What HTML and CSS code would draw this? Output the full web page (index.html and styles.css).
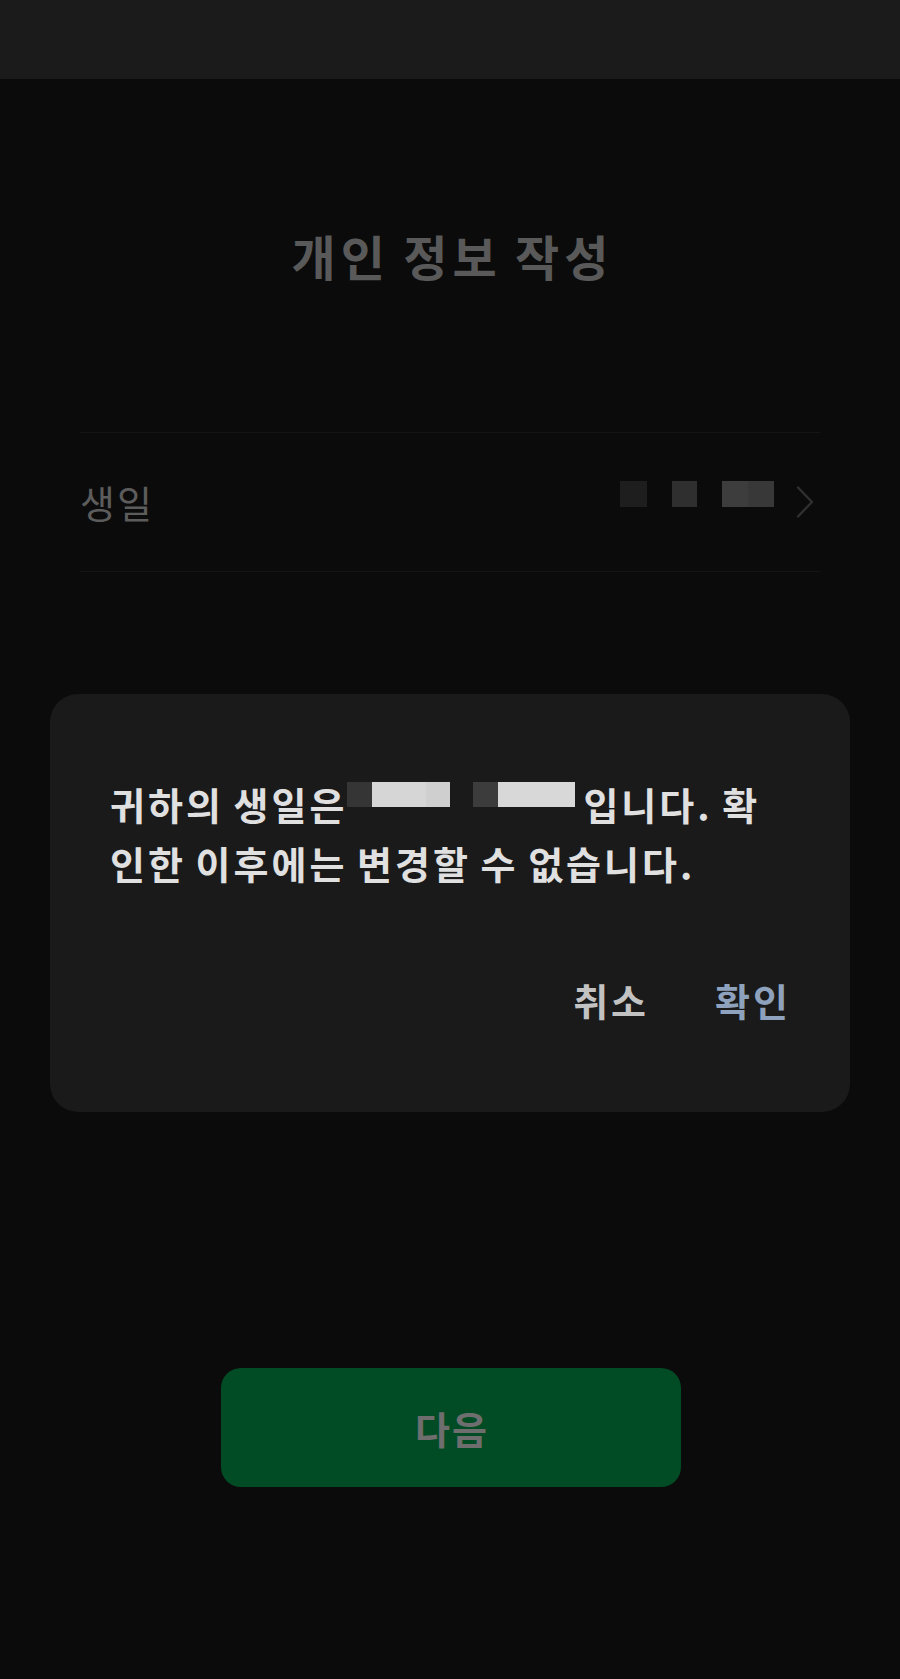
FILE: index.html
```html
<!DOCTYPE html>
<html lang="ko">
<head>
<meta charset="utf-8">
<title>개인 정보 작성</title>
<link rel="stylesheet" href="styles.css">
</head>
<body>
  <header class="app-bar"></header>

  <main class="page">
    <h1 class="page-title">개인 정보 작성</h1>

    <div class="field-row">
      <span class="field-label">생일</span>
      <span class="field-value">
        <span class="masked">
          <span class="mask mask-1"></span>
          <span class="mask mask-2"></span>
          <span class="mask mask-3"></span>
        </span>
        <svg class="chevron" width="18" height="32" viewBox="0 0 18 32" aria-hidden="true">
          <path d="M2 1.5 L16 16 L2 30.5" fill="none" stroke="#303030" stroke-width="2.4" stroke-linecap="round" stroke-linejoin="round"/>
        </svg>
      </span>
    </div>

    <div class="next-wrap">
      <button class="next-btn" type="button">다음</button>
    </div>
  </main>

  <div class="scrim">
    <div class="dialog" role="dialog">
      <p class="dialog-text">귀하의 생일은<span class="hidden-date"><span class="m-dark"></span><span class="m-light a"></span><span class="m-light b"></span></span><span class="hidden-date second"><span class="m-dark c"></span><span class="m-light d"></span></span>입니다. 확인한 이후에는 변경할 수 없습니다.</p>
      <div class="dialog-actions">
        <button class="action cancel" type="button">취소</button>
        <button class="action confirm" type="button">확인</button>
      </div>
    </div>
  </div>
</body>
</html>
```

FILE: styles.css
```css
* {
  box-sizing: border-box;
}

html,
body {
  margin: 0;
  padding: 0;
}

body {
  width: 900px;
  min-height: 1679px;
  background: #0b0b0b;
  font-family: "Noto Sans CJK KR", "Noto Sans", sans-serif;
}

/* top app bar */
.app-bar {
  height: 79px;
  background: #1b1b1b;
}

.page {
  padding: 0 80px;
}

.page-title {
  margin: 152px 0 0;
  text-align: center;
  font-size: 48px;
  line-height: 48px;
  font-weight: 700;
  color: #595959;
  letter-spacing: 5px;
  word-spacing: -5px;
  text-indent: 5px;
}

/* birthday row */
.field-row {
  margin-top: 153px;
  height: 140px;
  border-top: 1px solid #151515;
  border-bottom: 1px solid #151515;
  display: flex;
  align-items: center;
  justify-content: space-between;
  padding: 0 6px 0 0;
}

.field-label {
  font-size: 38px;
  font-weight: 400;
  color: #5c5c5c;
  line-height: 1;
  letter-spacing: 2px;
}

.field-value {
  display: flex;
  align-items: center;
}

.masked {
  display: flex;
  gap: 25px;
  margin-bottom: 16px;
}

.mask {
  display: block;
  height: 26px;
}

.mask-1 {
  width: 27px;
  background: #1e1e1e;
}

.mask-2 {
  width: 25px;
  background: #2f2f2f;
}

.mask-3 {
  width: 52px;
  background: linear-gradient(90deg, #3d3d3d 50%, #383838 50%);
}

.chevron {
  display: block;
  margin-left: 22px;
}

/* primary action */
.next-wrap {
  margin-top: 796px;
  display: flex;
  justify-content: center;
}

.next-btn {
  width: 460px;
  height: 119px;
  border: 0;
  border-radius: 20px;
  background: #024c25;
  color: #6e6e6e;
  font-family: inherit;
  font-size: 38px;
  font-weight: 700;
  letter-spacing: 2px;
  text-indent: 2px;
  padding: 0;
  margin-left: 2px;
}

/* confirmation dialog layer */
.scrim {
  position: fixed;
  inset: 0;
  display: flex;
  justify-content: center;
  align-items: flex-start;
  padding-top: 694px;
}

.dialog {
  width: 800px;
  background: #1a1a1a;
  border-radius: 28px;
  padding: 80px 59px 82px 60px;
}

.dialog-text {
  margin: 0;
  font-size: 38px;
  line-height: 59px;
  font-weight: 700;
  color: #e0e0e0;
  letter-spacing: 3px;
  word-spacing: -4px;
  word-break: break-all;
}

.hidden-date {
  display: inline-flex;
  vertical-align: top;
  margin-top: 8px;
  height: 25px;
}

.hidden-date.second {
  margin-left: 23px;
  margin-right: 8px;
}

.m-dark {
  width: 25px;
  background: #353535;
}

.m-dark.c {
  background: #3c3c3c;
}

.m-light.a {
  width: 54px;
  background: #d6d6d6;
}

.m-light.b {
  width: 24px;
  background: #cfcfcf;
}

.m-light.d {
  width: 77px;
  background: #d8d8d8;
}

.dialog-actions {
  margin-top: 78px;
  display: flex;
  justify-content: flex-end;
  gap: 66px;
}

.action {
  border: 0;
  background: none;
  padding: 0;
  font-family: inherit;
  font-size: 38px;
  line-height: 60px;
  font-weight: 700;
  letter-spacing: 3px;
}

.cancel {
  color: #c2c2c2;
}

.confirm {
  color: #8ea2bd;
}
```
